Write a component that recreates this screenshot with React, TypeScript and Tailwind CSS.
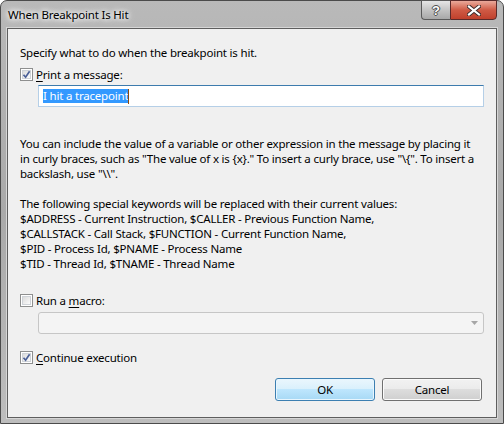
import React from "react";

const font = { fontFamily: '"Noto Sans", "Open Sans", sans-serif' };

function CheckBox({ checked }: { checked: boolean }) {
  return (
    <div className="w-[13px] h-[13px] border border-[#8e8f8f] bg-white p-[1px] shrink-0">
      <div className="w-full h-full border border-[#cfd3d8] bg-gradient-to-br from-[#dcdcdc] to-[#fbfbfb] relative">
        {checked && (
          <svg viewBox="0 0 9 9" className="absolute left-[-1px] top-[-1px] w-[9px] h-[9px]">
            <path d="M1.5 4.8 L3.6 7.2 L7.6 1.2" stroke="#4a5f97" strokeWidth="1.7" fill="none" strokeLinejoin="miter" />
          </svg>
        )}
      </div>
    </div>
  );
}

export default function App() {
  return (
    <div
      className="w-[504px] h-[424px] overflow-hidden text-[11.5px] tracking-[-0.2px] text-black leading-[15px]"
      style={font}
    >
      <div className="w-[504px] h-[424px] rounded-t-[7px] border border-[#4b4b4b] bg-gradient-to-b from-[#b9b9b9] via-[#a9a9a9] to-[#bdbdbd] flex flex-col">
        {/* Title bar */}
        <div className="h-[27px] flex justify-between items-start relative shrink-0">
          <div className="pl-[7px] pt-[6px] flex items-center">
            <span className="text-[11.5px] leading-[16px] text-black [text-shadow:0_0_8px_#ffffff,0_0_6px_#ffffff,0_0_4px_#f0f0f0]">
              When Breakpoint Is Hit
            </span>
          </div>
          <div className="flex mr-[6px] mt-[-1px]">
            <div className="w-[29px] h-[20px] border border-[#5a5a5a] border-r-0 rounded-bl-[4px] bg-gradient-to-b from-[#e6e6e6] via-[#c4c4c4] to-[#a8a8a8] flex items-center justify-center">
              <span
                className="text-white font-bold text-[13px] leading-[13px] tracking-normal [text-shadow:0_0_1px_#333,1px_0_0_#555,-1px_0_0_#555,0_1px_0_#555,0_-1px_0_#555]"
                style={{ fontFamily: '"Liberation Sans", sans-serif' }}
              >
                ?
              </span>
            </div>
            <div className="w-[47px] h-[20px] border border-[#5a2a2a] rounded-br-[4px] bg-gradient-to-b from-[#e9a99b] via-[#cf5a45] to-[#c0402c] flex items-center justify-center">
              <svg viewBox="0 0 14 11" className="w-[14px] h-[11px]">
                <path d="M2 1.5 L12 9.5 M12 1.5 L2 9.5" stroke="#3a2a2a" strokeWidth="4" strokeLinecap="square" />
                <path d="M2 1.5 L12 9.5 M12 1.5 L2 9.5" stroke="#ffffff" strokeWidth="2.2" strokeLinecap="square" />
              </svg>
            </div>
          </div>
        </div>

        {/* Client area */}
        <div className="mx-[6px] h-[390px] border border-[#5e5e5e] bg-[#f0f0f0] flex flex-col pl-[12px] pr-[12px] shadow-[0_0_0_1px_#d6d6d6]">
          <div className="mt-[16px] whitespace-nowrap">Specify what to do when the breakpoint is hit.</div>

          <div className="mt-[7px] flex items-center h-[15px]">
            <CheckBox checked />
            <span className="ml-[3px]">
              <span className="underline underline-offset-2">P</span>rint a message:
            </span>
          </div>

          <div className="mt-[3px] ml-[18px] h-[22px] bg-white border border-[#b5cfe7] border-t-[#3d7bad] flex items-center pl-[4px]">
            <span className="bg-[#3399ff] text-white leading-[14px] h-[14px] inline-flex items-center">I hit a tracepoint</span>
            <span className="w-[1px] h-[15px] bg-[#8a4a10]"></span>
          </div>

          <div className="mt-[29px] whitespace-nowrap">
            <div>You can include the value of a variable or other expression in the message by placing it</div>
            <div>in curly braces, such as "The value of x is {"{x}"}." To insert a curly brace, use "\{"{"}". To insert a</div>
            <div>backslash, use "\\".</div>
          </div>

          <div className="mt-[15px] whitespace-nowrap">
            <div>The following special keywords will be replaced with their current values:</div>
            <div>$ADDRESS - Current Instruction, $CALLER - Previous Function Name,</div>
            <div>$CALLSTACK - Call Stack, $FUNCTION - Current Function Name,</div>
            <div>$PID - Process Id, $PNAME - Process Name</div>
            <div>$TID - Thread Id, $TNAME - Thread Name</div>
          </div>

          <div className="mt-[22px] flex items-center h-[15px]">
            <CheckBox checked={false} />
            <span className="ml-[3px]">
              Run a <span className="underline underline-offset-2">m</span>acro:
            </span>
          </div>

          <div className="mt-[4px] ml-[18px] h-[22px] bg-[#f4f4f4] border border-[#c6c6c6] rounded-[3px] flex items-center justify-end pr-[5px]">
            <svg viewBox="0 0 7 4" className="w-[7px] h-[4px]">
              <path d="M0 0 L7 0 L3.5 4 Z" fill="#a6a6a6" />
            </svg>
          </div>

          <div className="mt-[16px] flex items-center h-[15px]">
            <CheckBox checked />
            <span className="ml-[3px]">
              <span className="underline underline-offset-2">C</span>ontinue execution
            </span>
          </div>

          <div className="mt-[13px] flex justify-end gap-[7px] mr-[2px]">
            <div className="w-[100px] h-[23px] rounded-[3px] border border-[#3c7fb1] bg-[linear-gradient(to_bottom,#eaf6fd_0%,#d9f0fc_50%,#bee6fd_50%,#a7d9f5_100%)] shadow-[inset_0_0_0_1px_#e8f6fe] flex items-center justify-center">
              OK
            </div>
            <div className="w-[100px] h-[23px] rounded-[3px] border border-[#707070] bg-[linear-gradient(to_bottom,#f2f2f2_0%,#ebebeb_50%,#dddddd_50%,#cfcfcf_100%)] shadow-[inset_0_0_0_1px_#fbfbfb] flex items-center justify-center">
              Cancel
            </div>
          </div>
        </div>
      </div>
    </div>
  );
}
